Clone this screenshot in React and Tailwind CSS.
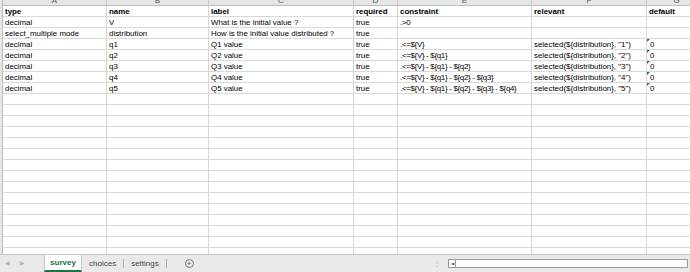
import React from 'react';

const cols = [
  { letter: 'A', w: 104 },
  { letter: 'B', w: 102 },
  { letter: 'C', w: 145 },
  { letter: 'D', w: 44 },
  { letter: 'E', w: 134 },
  { letter: 'F', w: 115 },
  { letter: 'G', w: 60 },
];

const rows = [
  ['type', 'name', 'label', 'required', 'constraint', 'relevant', 'default'],
  ['decimal', 'V', 'What is the initial value ?', 'true', '.>0', '', ''],
  ['select_multiple mode', 'distribution', 'How is the initial value distributed ?', 'true', '', '', ''],
  ['decimal', 'q1', 'Q1 value', 'true', '.<=${V}', 'selected(${distribution}, "1")', '0'],
  ['decimal', 'q2', 'Q2 value', 'true', '.<=${V} - ${q1}', 'selected(${distribution}, "2")', '0'],
  ['decimal', 'q3', 'Q3 value', 'true', '.<=${V} - ${q1} - ${q2}', 'selected(${distribution}, "3")', '0'],
  ['decimal', 'q4', 'Q4 value', 'true', '.<=${V} - ${q1} - ${q2} - ${q3}', 'selected(${distribution}, "4")', '0'],
  ['decimal', 'q5', 'Q5 value', 'true', '.<=${V} - ${q1} - ${q2} - ${q3} - ${q4}', 'selected(${distribution}, "5")', '0'],
];

const emptyRows = Array.from({ length: 16 }, () => ['', '', '', '', '', '', '']);

const Cell = ({ w, children, bold, flag, tight }) => (
  <div
    className={`relative shrink-0 h-full border-r border-[#d6d6d6] px-[2px] overflow-visible whitespace-nowrap ${bold ? 'font-bold' : ''} ${tight ? 'tracking-[-0.3px]' : ''}`}
    style={{ width: w }}
  >
    {flag && (
      <span className="absolute left-0 top-0 w-0 h-0 border-t-[3px] border-r-[3px] border-t-[#1e7e34] border-r-transparent" />
    )}
    {children}
  </div>
);

export default function App() {
  const all = [...rows, ...emptyRows];
  return (
    <div
      className="w-[690px] h-[272px] bg-white flex flex-col overflow-hidden text-black"
      style={{ fontFamily: '"Liberation Sans", Arial, sans-serif' }}
    >
      <div className="flex-1 overflow-hidden flex">
        <div className="w-[3px] shrink-0 bg-[#e6e6e6] border-r border-[#bdbdbd]" />
        <div className="flex-1 overflow-hidden">
          {/* column letters, cut off at top */}
          <div className="flex h-[6px] bg-[#e6e6e6] border-b border-[#bdbdbd] overflow-hidden">
            {cols.map((c) => (
              <div
                key={c.letter}
                className="shrink-0 border-r border-[#c8c8c8] flex items-end justify-center text-[8px] leading-[8px] text-[#555]"
                style={{ width: c.w }}
              >
                {c.letter}
              </div>
            ))}
          </div>
          {all.map((r, i) => (
            <div key={i} className="flex h-[11px] border-b border-[#d9d9d9] text-[7.9px] leading-[11px]">
              {r.map((v, j) => (
                <Cell key={j} w={cols[j].w} bold={i === 0} tight={i > 0 && j === 4} flag={j === 6 && v === '0'}>
                  <span className={j === 6 && v === '0' ? 'pl-[1px]' : ''}>{v}</span>
                </Cell>
              ))}
            </div>
          ))}
        </div>
      </div>

      {/* sheet tab bar */}
      <div className="h-[18px] shrink-0 bg-[#e9e9e9] border-t border-[#c6c6c6] flex items-stretch text-[8px]">
        <div className="w-[44px] flex items-center gap-[10px] pl-[5px] text-[#b5b5b5] text-[6px]">
          <span>◀</span>
          <span>▶</span>
        </div>
        <div className="w-[38px] bg-white flex items-center justify-center font-bold text-[#217346] border-b-2 border-[#217346] border-x border-x-[#c6c6c6]">
          survey
        </div>
        <div className="flex items-center px-[7px] text-[#444] border-r border-[#b0b0b0] my-[4px]">choices</div>
        <div className="flex items-center px-[7px] text-[#444] border-r border-[#b0b0b0] my-[4px]">settings</div>
        <div className="flex items-center pl-[18px]">
          <span className="w-[9px] h-[9px] rounded-full border border-[#777] flex items-center justify-center text-[8px] leading-[8px] text-[#555]">+</span>
        </div>
        <div className="flex-1 flex items-center justify-end pr-[2px]">
          <span className="text-[#b0b0b0] text-[8px] mr-[7px]">⋮</span>
          <div className="w-[240px] h-[9px] border border-[#9a9a9a] bg-white flex items-center">
            <div className="w-[7px] h-full border-r border-[#9a9a9a] flex items-center justify-center text-[4px] text-[#555]">◀</div>
          </div>
        </div>
      </div>
    </div>
  );
}
